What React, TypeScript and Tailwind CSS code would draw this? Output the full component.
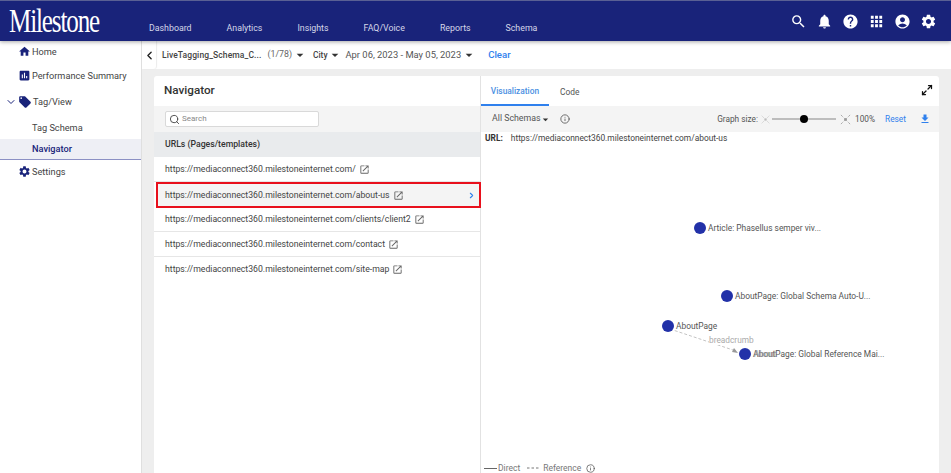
import { ChevronDown, ChevronLeft, ChevronRight, Info, Maximize2, Search } from "lucide-react";
import { MdAccountCircle, MdApps, MdArrowDropDown, MdAssessment, MdFileDownload, MdHelp, MdHome, MdLocalOffer, MdNotifications, MdOpenInNew, MdSearch, MdSettings } from "react-icons/md";

const navItems = ["Dashboard", "Analytics", "Insights", "FAQ/Voice", "Reports", "Schema"];

const urls = [
  "https://mediaconnect360.milestoneinternet.com/",
  "https://mediaconnect360.milestoneinternet.com/about-us",
  "https://mediaconnect360.milestoneinternet.com/clients/client2",
  "https://mediaconnect360.milestoneinternet.com/contact",
  "https://mediaconnect360.milestoneinternet.com/site-map",
];

const nodes = [
  { label: "Article: Phasellus semper viv...", left: "left-[213px]", top: "top-[90px]" },
  { label: "AboutPage: Global Schema Auto-U...", left: "left-[240px]", top: "top-[158px]" },
  { label: "AboutPage", left: "left-[181px]", top: "top-[188px]" },
  { label: "AboutPage: Global Reference Mai...", left: "left-[258px]", top: "top-[216px]" },
];

// graph size icon: centre node with four corner arrows
function ClusterIcon({ size, className }: { size: number; className: string }) {
  return (
    <svg width={size} height={size} viewBox="0 0 12 12" className={className} fill="none" stroke="currentColor" strokeWidth="1">
      <path d="M1 1l2.5 2.5M11 1L8.5 3.5M1 11l2.5-2.5M11 11L8.5 8.5" strokeDasharray="1.5 0.8" />
      <rect x="4.5" y="4.5" width="3" height="3" fill="currentColor" stroke="none" />
    </svg>
  );
}

function Header() {
  return (
    <header className="relative z-10 flex h-[41px] shrink-0 items-center border-t border-[#5a6094] bg-[#19237a] text-white shadow-[0_1px_4px_rgba(0,0,0,0.35)]">
      <div className="w-[149px] shrink-0 pl-[9px]">
        <div className="origin-left scale-x-[0.76] whitespace-nowrap font-['Liberation_Serif',serif] text-[33px] leading-none tracking-[-1.5px]">Milestone</div>
      </div>
      <nav className="flex h-full items-end gap-[35px] pb-[5px] text-[8.8px] text-[#d5d7e8]">
        {navItems.map((item) => (
          <span key={item} className="leading-[16px]">{item}</span>
        ))}
      </nav>
      <div className="ml-auto flex items-center gap-[9px] pr-[14px]">
        <MdSearch size={17} />
        <MdNotifications size={17} />
        <MdHelp size={17} />
        <MdApps size={17} />
        <MdAccountCircle size={17} />
        <MdSettings size={17} />
      </div>
    </header>
  );
}

function Sidebar() {
  return (
    <aside className="flex w-[142px] shrink-0 flex-col border-r border-[#dfdfdf] bg-white text-[9.2px] text-[#444]">
      <div className="flex h-[21px] items-center gap-[1px] pl-[18px]">
        <MdHome size={13} className="text-[#19237a]" />
        <span>Home</span>
      </div>
      <div className="mt-[3px] flex h-[21px] items-center gap-[1px] pl-[18px]">
        <MdAssessment size={13} className="text-[#19237a]" />
        <span className="whitespace-nowrap">Performance Summary</span>
      </div>
      <div className="mt-[5px] flex h-[21px] items-center pl-[5px]">
        <ChevronDown size={12} className="text-[#19237a]" />
        <MdLocalOffer size={14} className="ml-[1px] text-[#19237a]" />
        <span className="ml-[1px]">Tag/View</span>
      </div>
      <div className="mt-[5px] flex h-[21px] items-center pl-[32px]">Tag Schema</div>
      <div className="mt-[1px] flex h-[21px] items-center border-b border-[#8b90c4] bg-[#eeeff5] pl-[32px] font-medium text-[#19237a]">Navigator</div>
      <div className="mt-[1px] flex h-[21px] items-center gap-[1px] pl-[18px]">
        <MdSettings size={13} className="text-[#19237a]" />
        <span>Settings</span>
      </div>
    </aside>
  );
}

function FilterBar() {
  return (
    <div className="flex h-[28px] shrink-0 items-center bg-white text-[#444]">
      <div className="flex h-full w-[14px] items-center justify-center rounded-br-[3px] shadow-[1px_0_1px_rgba(0,0,0,0.08)]">
        <ChevronLeft size={13} strokeWidth={2.5} className="text-[#222]" />
      </div>
      <span className="ml-[6px] text-[8.5px] font-medium tracking-[0.1px]">LiveTagging_Schema_C...</span>
      <span className="ml-[6px] text-[8.8px] text-[#666]">(1/78)</span>
      <MdArrowDropDown size={16} className="text-[#333]" />
      <span className="ml-[5px] text-[8.4px] font-medium">City</span>
      <MdArrowDropDown size={16} className="text-[#333]" />
      <span className="ml-[2px] text-[9.4px] text-[#555]">Apr 06, 2023 - May 05, 2023</span>
      <MdArrowDropDown size={16} className="text-[#333]" />
      <span className="ml-[11px] text-[9.6px] font-medium text-[#2f80ed]">Clear</span>
    </div>
  );
}

function UrlPanel() {
  return (
    <section className="flex w-[327px] shrink-0 flex-col border-r border-[#e2e2e2]">
      <h2 className="flex h-[30px] items-center pl-[10px] text-[11.7px] font-medium text-[#333]">Navigator</h2>
      <div className="flex h-[26px] items-center bg-[#f4f4f4] pl-[11px]">
        <div className="flex h-[16px] w-[154px] items-center gap-[2px] rounded-[2px] border border-[#d9d9d9] bg-white pl-[3px] text-[8px] text-[#888]">
          <Search size={11} className="text-[#444]" />
          <span>Search</span>
        </div>
      </div>
      <div className="flex h-[25px] items-center bg-[#e9ebed] pl-[11px] text-[8.7px] font-medium text-[#333]">URLs (Pages/templates)</div>
      <ul className="text-[8.7px] text-[#444]">
        {urls.map((url, i) => (
          <li
            key={url}
            className={
              i === 1
                ? "relative z-10 -mb-px ml-[2px] -mr-px flex h-[26px] items-center border-2 border-[#e8101c] bg-[#f4f4f4] pl-[7px] pr-[3px]"
                : "flex h-[25px] items-center border-b border-[#e6e6e6] pl-[11px] last:border-b-0"
            }
          >
            <span className="pt-[1px]">{url}</span>
            <MdOpenInNew size={11} className="ml-[3px] text-[#666]" />
            {i === 1 && <ChevronRight size={9} strokeWidth={3} className="ml-auto text-[#2f80ed]" />}
          </li>
        ))}
      </ul>
    </section>
  );
}

function GraphToolbar() {
  return (
    <div className="flex h-[26px] shrink-0 items-center bg-[#f4f4f4] text-[8.3px] text-[#555]">
      <span className="ml-[11px] text-[8.8px]">All Schemas</span>
      <MdArrowDropDown size={13} className="-ml-[2px] text-[#333]" />
      <Info size={10} className="ml-[8px] text-[#555]" />
      <span className="ml-auto">Graph size:</span>
      <ClusterIcon size={9} className="ml-[3px] text-[#bbb]" />
      <div className="relative mx-[2px] h-[1.5px] w-[64px] bg-[#bdbdbd]">
        <span className="absolute left-[28px] top-[-3.5px] h-[8px] w-[8px] rounded-full bg-black" />
      </div>
      <ClusterIcon size={11} className="ml-[2px] text-[#999]" />
      <span className="ml-[4px]">100%</span>
      <span className="ml-[10px] text-[#2f80ed]">Reset</span>
      <MdFileDownload size={12} className="ml-[13px] mr-[8px] text-[#2f80ed]" />
    </div>
  );
}

function Graph() {
  return (
    <div className="relative min-h-0 flex-1 text-[#555]">
      <div className="ml-[4px] flex gap-[8px] text-[8.4px] leading-[12px] text-[#444]">
        <span className="font-bold text-[#333]">URL:</span>
        <span>https://mediaconnect360.milestoneinternet.com/about-us</span>
      </div>
      <svg className="absolute left-[187px] top-[194px]" width="80" height="30" viewBox="0 0 80 30">
        <path d="M2 3 L68 25" stroke="#c4c4c4" strokeWidth="1" strokeDasharray="3 2" fill="none" />
        <path d="M70 27 L64 26 L66 22 Z" fill="#999" />
      </svg>
      <span className="absolute left-[228px] top-[203px] bg-white text-[8.3px] leading-[10px] text-[#aaa]">breadcrumb</span>
      {nodes.map((node) => (
        <div key={node.label} className={`absolute flex items-center gap-[2px] ${node.left} ${node.top}`}>
          <span className="h-[12px] w-[12px] rounded-full bg-[#2231a8]" />
          <span className="whitespace-nowrap text-[8.4px] leading-[12px]">{node.label}</span>
        </div>
      ))}
      <span className="absolute left-[273px] top-[216px] text-[8.4px] leading-[12px] text-[#999]">About</span>
      <div className="absolute bottom-[0px] left-[3px] flex items-center text-[8.5px] leading-[10px] text-[#777]">
        <span className="h-[1px] w-[13px] bg-[#666]" />
        <span className="ml-[1px]">Direct</span>
        <svg width="12" height="2" viewBox="0 0 12 2" className="ml-[7px]">
          <path d="M0 1h12" stroke="#777" strokeWidth="1" strokeDasharray="2.5 2" />
        </svg>
        <span className="ml-[4px]">Reference</span>
        <Info size={9} className="ml-[5px] text-[#555]" />
      </div>
    </div>
  );
}

export default function App() {
  return (
    <div className="flex h-[473px] w-[951px] flex-col overflow-hidden bg-[#eeeeee] font-['Roboto',sans-serif]">
      <Header />
      <div className="flex min-h-0 flex-1">
        <Sidebar />
        <main className="flex min-w-0 flex-1 flex-col">
          <FilterBar />
          <div className="mx-[12px] mt-[7px] flex min-h-0 flex-1 rounded-t-[3px] bg-white">
            <UrlPanel />
            <section className="flex min-w-0 flex-1 flex-col">
              <div className="flex h-[30px] shrink-0 items-center text-[8.4px] text-[#555]">
                <span className="flex h-full w-[68px] items-center justify-center border-b-2 border-[#2f80ed] pt-[2px] font-medium text-[#4a90e2]">Visualization</span>
                <span className="ml-[11px] pt-[2px]">Code</span>
                <Maximize2 size={12} strokeWidth={2.5} className="mb-[2px] ml-auto mr-[6px] text-[#111]" />
              </div>
              <GraphToolbar />
              <Graph />
            </section>
          </div>
        </main>
      </div>
    </div>
  );
}
